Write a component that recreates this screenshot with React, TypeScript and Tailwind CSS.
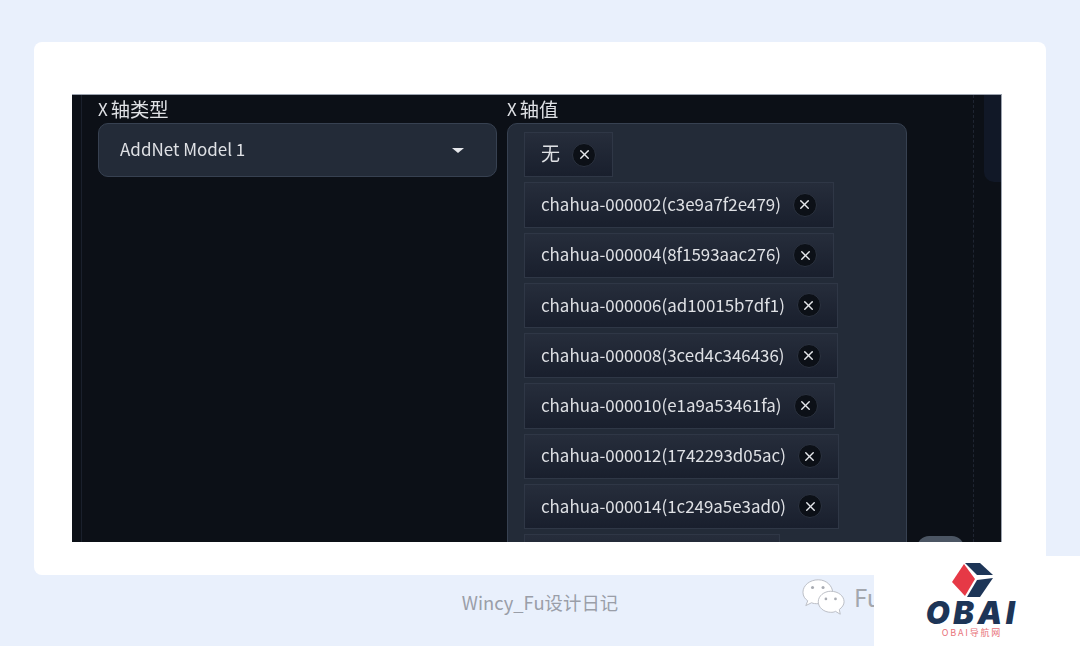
import React from 'react';
import { X } from 'lucide-react';

const chips = [
    'chahua-000002(c3e9a7f2e479)',
    'chahua-000004(8f1593aac276)',
    'chahua-000006(ad10015b7df1)',
    'chahua-000008(3ced4c346436)',
    'chahua-000010(e1a9a53461fa)',
    'chahua-000012(1742293d05ac)',
    'chahua-000014(1c249a5e3ad0)',
];

const Chip: React.FC<{ label: string; big?: boolean }> = ({ label, big }) => (
    <div className="flex h-[45.25px] shrink-0 items-center gap-3 border border-[#2f3746] bg-gradient-to-b from-[#262d3b] to-[#191f2d] px-4">
        <span className={big ? 'pb-[2px] text-[19px] text-[#dfe1e5]' : 'whitespace-nowrap pb-[2px] text-[16.9px] text-[#dfe1e5]'}>{label}</span>
        <span className="flex h-6 w-6 items-center justify-center rounded-full border border-[#2b3240] bg-[#0c1017] text-[#e5e7eb]">
            <X size={15} strokeWidth={2.25} />
        </span>
    </div>
);

const AxisLabel: React.FC<{ text: string }> = ({ text }) => (
    <div className="flex h-[28px] items-center gap-[3px] text-[19.3px] leading-[28px] text-[#dfe1e5]">
        <span className="text-[17px]">X</span>
        <span>{text}</span>
    </div>
);

const WeChat = () => (
    <svg width="44" height="38" viewBox="0 0 46 38" className="shrink-0">
        <path d="M17 1C8 1 1 7 1 14c0 4 2 7 5 9l-2 5 6-3c2 1 4 1 7 1 8 0 15-6 15-12S26 1 17 1z" fill="#fff" stroke="#b9bcc3" strokeWidth="1" />
        <path d="M30 13c-7 0-13 5-13 11s6 11 13 11c2 0 3 0 5-1l5 3-1-5c3-2 5-5 5-8 0-6-6-11-14-11z" fill="#fff" stroke="#b9bcc3" strokeWidth="1" />
        <circle cx="11" cy="9" r="1.6" fill="#a9acb3" />
        <circle cx="22" cy="9" r="1.6" fill="#a9acb3" />
        <circle cx="25" cy="21" r="1.4" fill="#a9acb3" />
        <circle cx="35" cy="21" r="1.4" fill="#a9acb3" />
    </svg>
);

export default function App() {
    return (
        <div className="relative h-[646px] w-[1080px] overflow-hidden bg-[#e9f0fc] px-[34px] pt-[42px] font-['Noto_Sans_CJK_SC','Noto_Sans',sans-serif]">
            {/* White card */}
            <div className="h-[533px] rounded-lg bg-white pl-[38px] pr-[44px] pt-[52px]">
                <div className="relative flex h-[448px] overflow-hidden border-r border-t border-[#9ca3af] bg-[#0c1017] blur-[0.4px]">
                    <div className="ml-[9px] flex h-full w-[893px] shrink-0 gap-[10px] border-l border-[#1a202c] pl-4">
                        <div className="w-[399px] shrink-0">
                            <AxisLabel text="轴类型" />
                            <div className="flex h-[54px] items-center justify-between rounded-[10px] border border-[#374151] bg-[#232b38] pl-[21px] pr-[32px]">
                                <span className="pb-[3px] text-[17px] text-[#dfe1e5]">AddNet Model 1</span>
                                <span className="h-0 w-0 border-x-[6px] border-t-[5px] border-x-transparent border-t-[#e5e7eb]" />
                            </div>
                        </div>
                        <div className="w-[400px] shrink-0">
                            <AxisLabel text="轴值" />
                            <div className="flex h-[500px] flex-col items-start gap-[5px] rounded-[10px] border border-[#374151] bg-[#232b38] pl-4 pt-2">
                                <Chip label="无" big />
                                {chips.map((c) => (
                                    <Chip key={c} label={c} />
                                ))}
                                {/* next chip is cut off by the crop, only its top edge shows */}
                                <div className="h-[45.25px] w-[256px] shrink-0 border border-[#2f3746] bg-gradient-to-b from-[#262d3b] to-[#191f2d]" />
                            </div>
                        </div>
                    </div>
                    <div className="ml-[-1px] h-full border-l border-dashed border-[#1f2532]" />
                    <div className="ml-[10px] h-[87px] flex-1 rounded-bl-[10px] bg-[#111827]" />
                    {/* scroll button peeking at the bottom */}
                    <div className="absolute bottom-[-20px] left-[845px] h-[26px] w-[47px] rounded-t-[12px] bg-[#4b5563]" />
                </div>
            </div>

            {/* Footer caption */}
            <div className="mt-[14px] text-center text-[18.4px] leading-[26px] text-[#9a9ea8]">Wincy_Fu设计日记</div>

            {/* WeChat watermark */}
            <div className="absolute left-[802px] top-[578px] flex items-center gap-[8px]">
                <WeChat />
                <span className="text-[24px] text-[#a3a7ae]">Fu</span>
            </div>

            {/* OBAI logo block */}
            <div className="absolute bottom-0 right-0 flex h-[90px] w-[206px] flex-col items-center bg-white pr-[10px] pt-[6px]">
                <svg width="45" height="36" viewBox="0 0 45 36">
                    <path d="M2 20 L14 2 L25 17 L15 34 Z" fill="#e63946" />
                    <path d="M15 1 L30 1 L43 13 L27 13 Z" fill="#1d3557" />
                    <path d="M27 18 L43 16 L30 35 L17 35 Z" fill="#1d3557" />
                </svg>
                <div className="mt-[2px] font-['Inter',sans-serif] text-[31px] font-black italic leading-[26px] tracking-[3.5px] text-[#1d3557]">OBAI</div>
                <div className="mt-[1px] text-[9px] leading-[11px] tracking-[1.8px] text-[#e8727a]">OBAI导航网</div>
            </div>
        </div>
    );
}
